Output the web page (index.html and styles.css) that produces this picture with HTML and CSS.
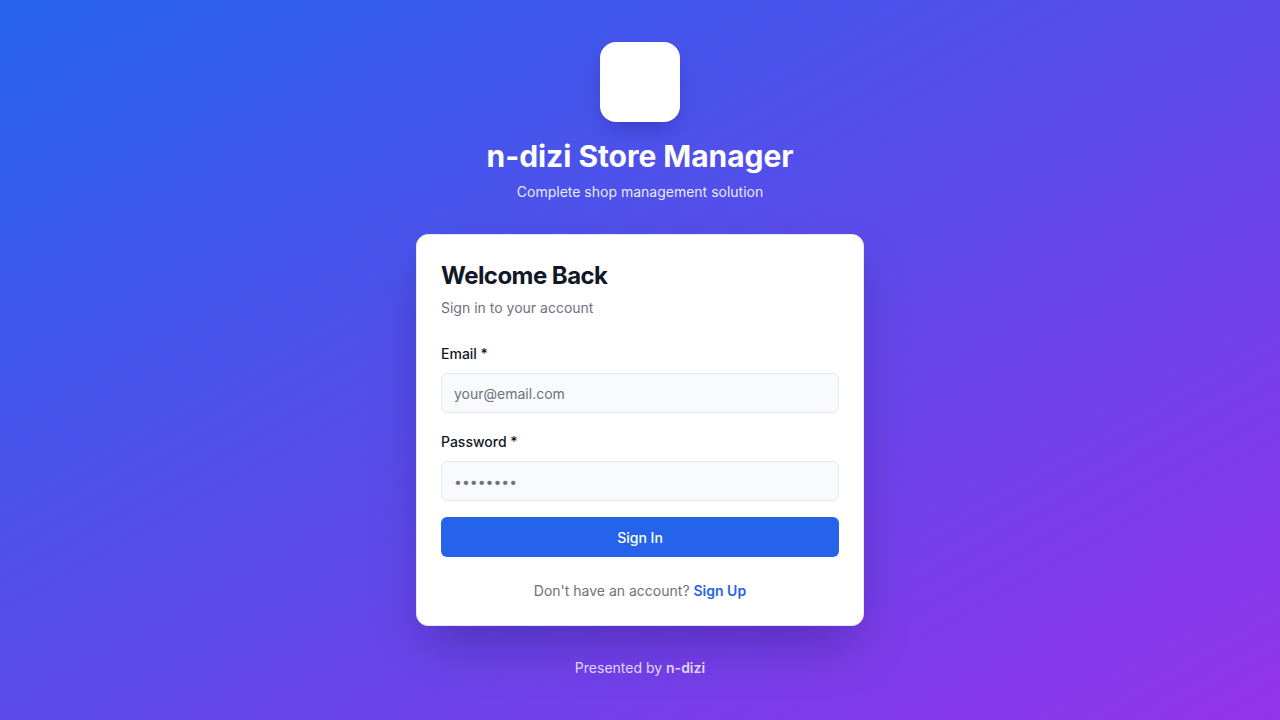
FILE: index.html
```html
<!DOCTYPE html>
<html lang="en">
<head>
<meta charset="utf-8">
<title>n-dizi Store Manager</title>
<link rel="stylesheet" href="styles.css">
</head>
<body>
<main class="page">
  <div class="brand">
    <div class="logo"></div>
    <h1 class="brand-title">n-dizi Store Manager</h1>
    <p class="brand-sub">Complete shop management solution</p>
  </div>
  <section class="card">
    <h2 class="card-title">Welcome Back</h2>
    <p class="card-sub">Sign in to your account</p>
    <form class="form">
      <div class="field">
        <label class="label" for="email">Email *</label>
        <input class="input" id="email" type="email" placeholder="your@email.com">
      </div>
      <div class="field">
        <label class="label" for="password">Password *</label>
        <input class="input input-pass" id="password" type="password" placeholder="••••••••">
      </div>
      <button class="btn" type="button">Sign In</button>
    </form>
    <p class="signup">Don't have an account? <a class="signup-link" href="#">Sign Up</a></p>
  </section>
  <p class="footer">Presented by <strong>n-dizi</strong></p>
</main>
</body>
</html>
```

FILE: styles.css
```css
* { box-sizing: border-box; }
html, body { margin: 0; padding: 0; }
body {
  font-family: Inter, "Noto Sans", "Liberation Sans", sans-serif;
  background: linear-gradient(to bottom right, #2563eb, #9333ea);
  min-height: 720px;
  color: #111827;
}
.page {
  min-height: 720px;
  display: flex;
  flex-direction: column;
  align-items: center;
  justify-content: center;
}
.brand {
  display: flex;
  flex-direction: column;
  align-items: center;
  color: #fff;
}
.logo {
  width: 80px;
  height: 80px;
  background: #fff;
  border-radius: 16px;
  box-shadow: 0 10px 20px -5px rgba(30, 20, 120, 0.35);
}
.brand-title {
  margin: 16px 0 0;
  font-size: 30px;
  line-height: 36px;
  font-weight: 700;
  letter-spacing: -0.05px;
}
.brand-sub {
  margin: 8px 0 0;
  font-size: 14px;
  line-height: 20px;
  color: rgba(255, 255, 255, 0.9);
}
.card {
  margin-top: 32px;
  width: 448px;
  background: #fff;
  border: 1px solid #e5e7eb;
  border-radius: 12px;
  padding: 25px 24px 24px;
  box-shadow: 0 25px 50px -12px rgba(20, 10, 80, 0.35);
}
.card-title {
  margin: 0;
  font-size: 24px;
  line-height: 32px;
  font-weight: 700;
  letter-spacing: -0.55px;
  color: #111827;
}
.card-sub {
  margin: 6px 0 0;
  font-size: 14px;
  line-height: 20px;
  color: #6b7280;
}
.form {
  margin-top: 26px;
  display: flex;
  flex-direction: column;
  gap: 19px;
}
.field {
  display: flex;
  flex-direction: column;
  gap: 9px;
}
.label {
  font-size: 14px;
  line-height: 20px;
  font-weight: 500;
  color: #111827;
}
.input {
  height: 40px;
  width: 100%;
  border: 1px solid #e2e8f0;
  border-radius: 6px;
  background: #f8fafc;
  padding: 0 12px;
  font-family: inherit;
  font-size: 14px;
  color: #111827;
  outline: none;
}
.input::placeholder { color: #6b7280; }
.btn {
  margin-top: -3px;
  height: 40px;
  width: 100%;
  border: 0;
  border-radius: 6px;
  background: #2563eb;
  color: #fff;
  font-family: inherit;
  font-size: 14px;
  font-weight: 500;
}
.signup {
  margin: 24px 0 0;
  text-align: center;
  font-size: 14px;
  line-height: 20px;
  color: #6b7280;
}
.signup-link {
  color: #2563eb;
  font-weight: 600;
  text-decoration: none;
}
.footer {
  margin: 32px 0 0;
  font-size: 14px;
  line-height: 20px;
  color: rgba(255, 255, 255, 0.8);
}
.footer strong { font-weight: 600; }
```
